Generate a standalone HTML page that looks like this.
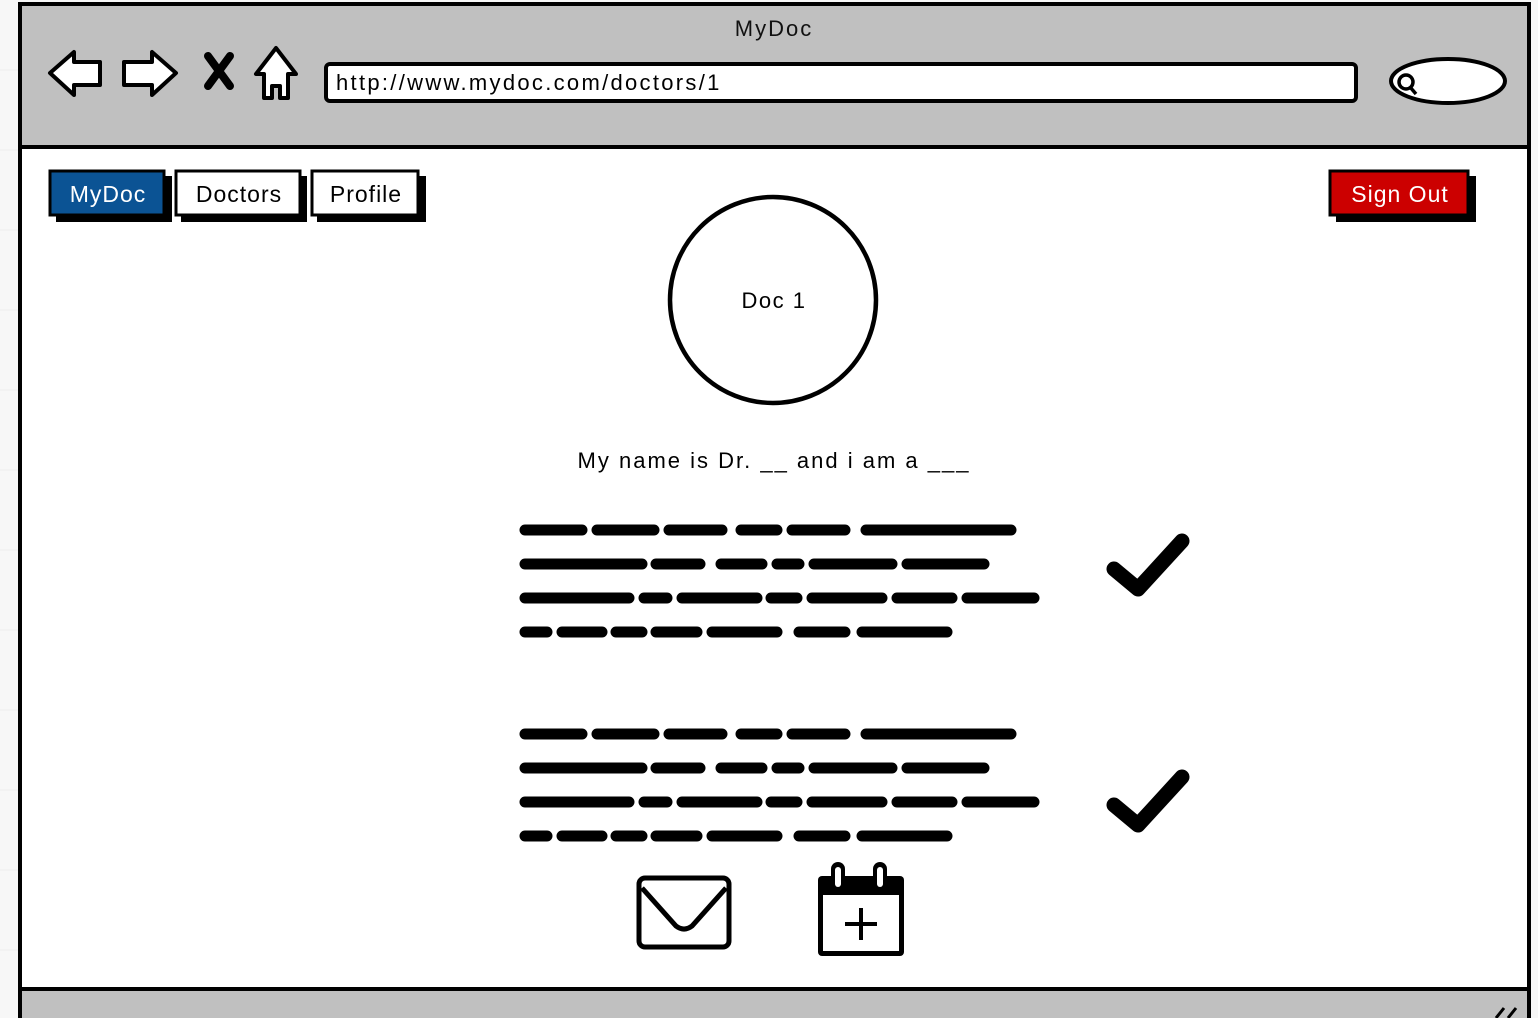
<!DOCTYPE html>
<html><head><meta charset="utf-8"><style>
html,body{margin:0;padding:0;width:1538px;height:1018px;overflow:hidden;background:#f7f7f7}
svg{display:block}
text{font-family:"Liberation Sans",sans-serif}
</style></head><body>
<svg width="1538" height="1018" viewBox="0 0 1538 1018" xmlns="http://www.w3.org/2000/svg">
<g stroke="#ececec" stroke-width="1"><line x1="0" y1="70" x2="18" y2="70"/><line x1="0" y1="150" x2="18" y2="150"/><line x1="0" y1="230" x2="18" y2="230"/><line x1="0" y1="310" x2="18" y2="310"/><line x1="0" y1="390" x2="18" y2="390"/><line x1="0" y1="470" x2="18" y2="470"/><line x1="0" y1="550" x2="18" y2="550"/><line x1="0" y1="630" x2="18" y2="630"/><line x1="0" y1="710" x2="18" y2="710"/><line x1="0" y1="790" x2="18" y2="790"/><line x1="0" y1="870" x2="18" y2="870"/><line x1="0" y1="950" x2="18" y2="950"/></g>
<rect x="20" y="4" width="1509" height="1020" fill="#fff" stroke="#000" stroke-width="4"/>
<rect x="22" y="6" width="1505" height="140" fill="#c0c0c0"/>
<line x1="20" y1="147" x2="1529" y2="147" stroke="#000" stroke-width="4"/>
<rect x="22" y="990" width="1505" height="30" fill="#c0c0c0"/>
<line x1="20" y1="989" x2="1529" y2="989" stroke="#000" stroke-width="4"/>
<text x="774" y="36" font-size="22" text-anchor="middle" fill="#111" letter-spacing="2">MyDoc</text>
<path d="M50 73 L74 52 L74 62 L100 62 L100 85 L74 85 L74 95 Z" fill="#fff" stroke="#000" stroke-width="4" stroke-linejoin="round"/>
<path d="M176 73 L152 52 L152 62 L124 62 L124 85 L152 85 L152 95 Z" fill="#fff" stroke="#000" stroke-width="4" stroke-linejoin="round"/>
<path d="M208 56 L230 86 M230 56 L208 86" stroke="#000" stroke-width="8" stroke-linecap="round"/>
<path d="M276 48 L256 74 L264 74 L264 98 L272 98 L272 86 L280 86 L280 98 L288 98 L288 74 L296 74 Z" fill="#fff" stroke="#000" stroke-width="4" stroke-linejoin="round"/>
<rect x="326" y="64" width="1030" height="37" rx="4" fill="#fff" stroke="#000" stroke-width="4"/>
<text x="336" y="90" font-size="22" fill="#000" letter-spacing="2.3">http://www.mydoc.com/doctors/1</text>
<ellipse cx="1448" cy="81" rx="57" ry="22" fill="#fff" stroke="#000" stroke-width="4"/>
<circle cx="1406" cy="82" r="7" fill="none" stroke="#000" stroke-width="3.5"/><line x1="1410" y1="87" x2="1416" y2="94" stroke="#000" stroke-width="3.5"/>
<rect x="56" y="176" width="116" height="46" fill="#000"/>
<rect x="50" y="171" width="114" height="44" fill="#0b5394" stroke="#000" stroke-width="3"/>
<text x="108" y="202" font-size="23" fill="#fff" text-anchor="middle" letter-spacing="1">MyDoc</text>
<rect x="181" y="176" width="126" height="46" fill="#000"/>
<rect x="176" y="171" width="124" height="44" fill="#fff" stroke="#000" stroke-width="3"/>
<text x="239" y="202" font-size="23" fill="#000" text-anchor="middle" letter-spacing="1">Doctors</text>
<rect x="317" y="176" width="109" height="46" fill="#000"/>
<rect x="312" y="171" width="106" height="44" fill="#fff" stroke="#000" stroke-width="3"/>
<text x="366" y="202" font-size="23" fill="#000" text-anchor="middle" letter-spacing="1">Profile</text>
<rect x="1336" y="176" width="140" height="46" fill="#000"/>
<rect x="1330" y="171" width="138" height="44" fill="#cc0000" stroke="#000" stroke-width="3"/>
<text x="1400" y="202" font-size="23" fill="#fff" text-anchor="middle" letter-spacing="1">Sign Out</text>
<circle cx="773" cy="300" r="103" fill="#fff" stroke="#000" stroke-width="4.5"/>
<text x="774" y="308" font-size="22" text-anchor="middle" fill="#000" letter-spacing="1.5">Doc 1</text>
<text x="774" y="468" font-size="22" text-anchor="middle" fill="#000" letter-spacing="2">My name is Dr. __ and i am a ___</text>
<g id="s" stroke="#000" stroke-width="11" stroke-linecap="round">
<path d="M525 530H582M597 530H654M669 530H722M741 530H777M792 530H845M866 530H1011"/>
<path d="M525 564H642M656 564H700M721 564H762M777 564H799M814 564H892M907 564H984"/>
<path d="M525 598H629M644 598H667M682 598H757M771 598H797M812 598H882M897 598H952M967 598H1034"/>
<path d="M525 632H547M562 632H602M616 632H642M656 632H697M712 632H777M799 632H845M862 632H947"/>
</g>
<use href="#s" transform="translate(0,204)"/>
<path d="M1114 569L1138 589L1182 541" fill="none" stroke="#000" stroke-width="15" stroke-linecap="round" stroke-linejoin="round"/>
<path d="M1114 805L1138 825L1182 777" fill="none" stroke="#000" stroke-width="15" stroke-linecap="round" stroke-linejoin="round"/>
<rect x="639" y="878" width="90" height="69" rx="6" fill="#fff" stroke="#000" stroke-width="5"/>
<path d="M642 888 L676 926 Q684 932 692 926 L726 888" fill="none" stroke="#000" stroke-width="5"/>
<rect x="818" y="876" width="86" height="80" rx="4" fill="#000"/>
<rect x="823" y="895" width="76" height="56" fill="#fff"/>
<rect x="831" y="862" width="14" height="30" rx="7" fill="#000"/><rect x="835" y="867" width="6" height="20" rx="3" fill="#fff"/>
<rect x="873" y="862" width="14" height="30" rx="7" fill="#000"/><rect x="877" y="867" width="6" height="20" rx="3" fill="#fff"/>
<path d="M861 908V940M845 924H877" stroke="#000" stroke-width="4"/>
<path d="M1496 1018L1504 1008M1508 1018L1516 1008" stroke="#000" stroke-width="3"/>
</svg>
</body></html>
